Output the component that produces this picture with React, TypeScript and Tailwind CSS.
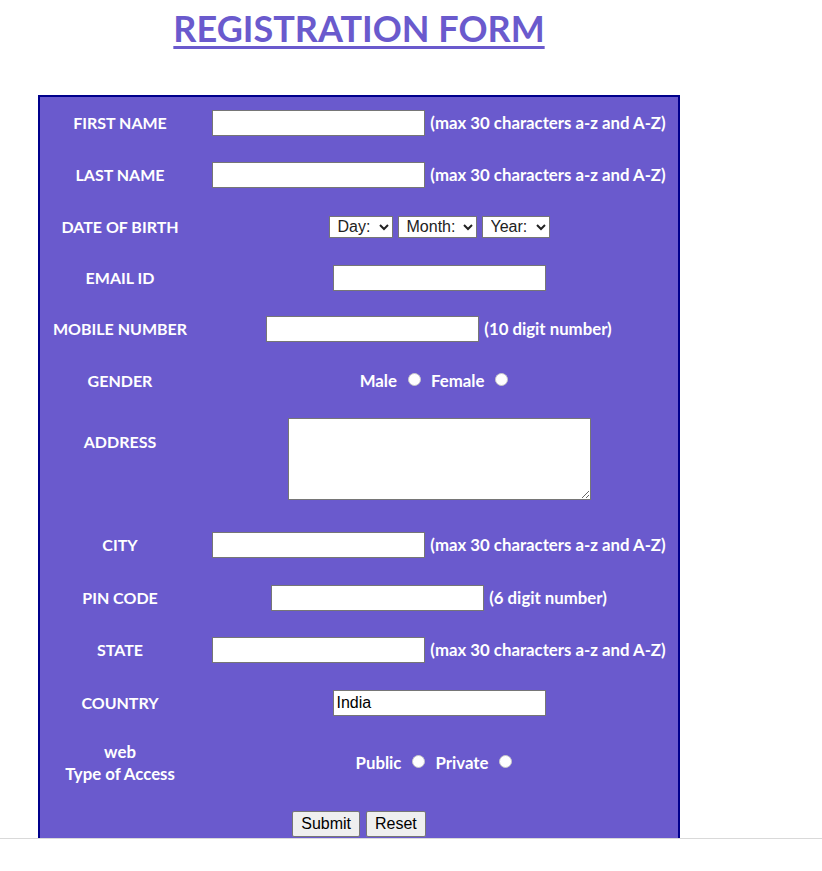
const label = "w-[160px] shrink-0 text-center text-[16px] font-bold text-white";
const field = "h-[26px] w-[213px] border border-[#767676] bg-white px-[3px] font-['Liberation_Sans',Arial,sans-serif] text-[16px] text-black outline-none";
const hint = "ml-[5px] text-[16.8px] font-bold text-white";
const select = "h-[22px] border border-[#767676] bg-white pl-[4px] font-['Liberation_Sans',Arial,sans-serif] text-[16px] text-[#222]";
const radio = "ml-[11px] mr-[10px] h-[13px] w-[13px] -translate-y-[2px] appearance-none rounded-full border border-[#c8c8c8] bg-white";
const button = "h-[26px] rounded-[2px] border border-[#767676] bg-[#efefef] px-[8px] font-['Liberation_Sans',Arial,sans-serif] text-[16px] text-black";

function Row({ name, h, children }: { name: React.ReactNode; h: string; children?: React.ReactNode }) {
  return (
    <div className={`flex items-center ${h}`}>
      <div className={label}>{name}</div>
      <div className="flex flex-1 items-center justify-center">{children}</div>
    </div>
  );
}

export default function App() {
  return (
    <div className="min-h-[871px] bg-white font-['Lato','Open_Sans',sans-serif]">
      <div className="h-[839px] overflow-hidden border-b border-[#d9d9d9]">
        <div className="ml-[38px] w-[642px]">
          <h1 className="flex h-[95px] justify-center pt-[1px] text-[36px] font-bold text-[#6a5acd]">
            <span className="underline decoration-[3px] underline-offset-[4px]">REGISTRATION FORM</span>
          </h1>
          <form className="border-2 border-[#00008b] bg-[#6a5acd]">
            <Row name="FIRST NAME" h="h-[52px]">
              <input className={field} />
              <span className={hint}>(max 30 characters a-z and A-Z)</span>
            </Row>
            <Row name="LAST NAME" h="h-[52px]">
              <input className={field} />
              <span className={hint}>(max 30 characters a-z and A-Z)</span>
            </Row>
            <Row name="DATE OF BIRTH" h="h-[51px]">
              <div className="flex gap-[5px]">
                <select className={`${select} w-[64px]`}><option>Day:</option></select>
                <select className={`${select} w-[79px]`}><option>Month:</option></select>
                <select className={`${select} w-[68px]`}><option>Year:</option></select>
              </div>
            </Row>
            <Row name="EMAIL ID" h="h-[51px]">
              <input className={field} />
            </Row>
            <Row name="MOBILE NUMBER" h="h-[52px]">
              <input className={field} />
              <span className={hint}>(10 digit number)</span>
            </Row>
            <Row name="GENDER" h="h-[52px]">
              <div className="flex items-center text-[16.8px] font-bold text-white">
                <span>Male</span>
                <input type="radio" name="gender" className={radio} />
                <span>Female</span>
                <input type="radio" name="gender" className={`${radio} mr-0`} />
              </div>
            </Row>
            <div className="flex h-[112px] items-start">
              <div className={`${label} pt-[23px]`}>ADDRESS</div>
              <div className="flex flex-1 justify-center pt-[11px]">
                <textarea className="h-[82px] w-[303px] border border-[#767676] bg-white" />
              </div>
            </div>
            <Row name="CITY" h="h-[52px]">
              <input className={field} />
              <span className={hint}>(max 30 characters a-z and A-Z)</span>
            </Row>
            <Row name="PIN CODE" h="h-[53px]">
              <input className={field} />
              <span className={hint}>(6 digit number)</span>
            </Row>
            <Row name="STATE" h="h-[52px]">
              <input className={field} />
              <span className={hint}>(max 30 characters a-z and A-Z)</span>
            </Row>
            <Row name="COUNTRY" h="h-[53px]">
              <input className={field} defaultValue="India" />
            </Row>
            <Row
              name={
                <span className="text-[16.8px]">
                  web
                  <br />
                  Type of Access
                </span>
              }
              h="h-[68px] leading-[22px]"
            >
              <div className="flex items-center text-[16.8px] font-bold text-white">
                <span>Public</span>
                <input type="radio" name="access" className={radio} />
                <span>Private</span>
                <input type="radio" name="access" className={`${radio} mr-0`} />
              </div>
            </Row>
            <div className="flex h-[54px] items-center justify-center gap-[6px]">
              <button type="submit" className={button}>Submit</button>
              <button type="reset" className={button}>Reset</button>
            </div>
          </form>
        </div>
      </div>
    </div>
  );
}
